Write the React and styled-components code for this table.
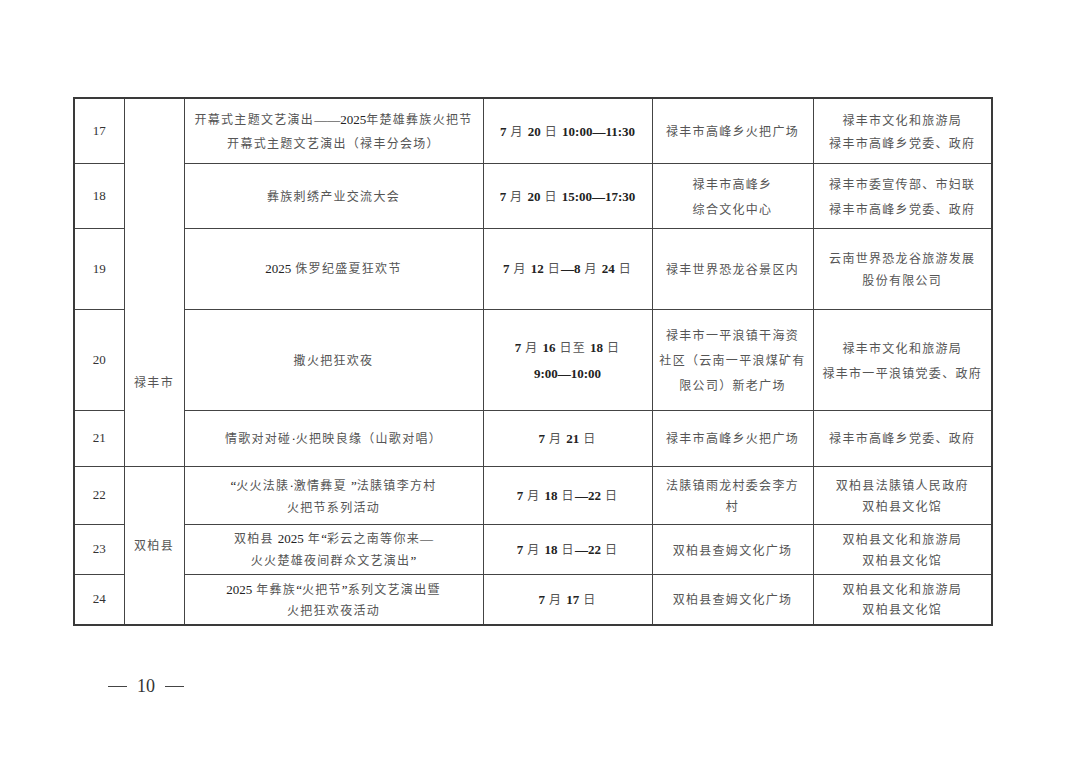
import React from 'react';
import styled, { createGlobalStyle } from 'styled-components';

const GlobalStyle = createGlobalStyle`
  html, body {
    margin: 0;
    padding: 0;
    background: #fff;
  }
  body {
    font-family: "Liberation Serif", "Noto Sans CJK SC", serif;
  }
`;

const Page = styled.div`
  width: 1080px;
  height: 764px;
  box-sizing: border-box;
  padding: 97px 0 0 73px;
  display: flex;
  flex-direction: column;
`;

const Table = styled.table`
  width: 918px;
  table-layout: fixed;
  border-collapse: collapse;
  border: 2px solid #3a3a3a;
`;

const Row = styled.tr`
  height: ${(p) => p.h}px;
`;

const Cell = styled.td`
  border: 1.5px solid #444;
  padding: ${(p) => (p.offset ? `${p.offset}px 0 0 0` : '0')};
  text-align: center;
  vertical-align: middle;
  font-family: "Noto Sans CJK SC", "Liberation Serif", sans-serif;
  font-size: 12px;
  letter-spacing: 1.3px;
  color: #555;
  line-height: ${(p) => p.lh || 22}px;
`;

const NoCell = styled(Cell)`
  font-family: "Liberation Serif", serif;
  font-size: 13px;
  letter-spacing: 0;
  color: #333;
`;

const Num = styled.span`
  font-family: "Liberation Serif", serif;
  font-size: 13px;
  letter-spacing: 0;
  color: #222;
  font-weight: ${(p) => (p.bold ? 700 : 400)};
`;

const Line = styled.div`
  white-space: nowrap;
`;

const Footer = styled.div`
  margin: 50px 0 0 35px;
  font-family: "Liberation Serif", serif;
  font-size: 18px;
  color: #333;
  display: flex;
  gap: 10px;
  align-items: center;
`;

const Dash = styled.span`
  display: inline-block;
  width: 19px;
  height: 1px;
  background: #444;
`;

// digits, times, dashes and quotes render in the serif face
const renderText = (text, bold) =>
  text.split(/([0-9:—“”·]+)/).map((part, i) =>
    /[0-9:—“”·]/.test(part) ? (
      <Num key={i} bold={bold}>
        {part}
      </Num>
    ) : (
      <React.Fragment key={i}>{part}</React.Fragment>
    )
  );

const Lines = ({ lines, bold }) =>
  lines.map((l, i) => <Line key={i}>{renderText(l, bold)}</Line>);

const cols = [50, 60, 299, 169, 161, 179];

const rows = [
  {
    no: 17,
    h: 65,
    lh: 23,
    event: ['开幕式主题文艺演出——2025年楚雄彝族火把节', '开幕式主题文艺演出（禄丰分会场）'],
    date: ['7 月 20 日 10:00—11:30'],
    place: ['禄丰市高峰乡火把广场'],
    org: ['禄丰市文化和旅游局', '禄丰市高峰乡党委、政府'],
  },
  {
    no: 18,
    h: 65,
    lh: 25,
    event: ['彝族刺绣产业交流大会'],
    date: ['7 月 20 日 15:00—17:30'],
    place: ['禄丰市高峰乡', '综合文化中心'],
    org: ['禄丰市委宣传部、市妇联', '禄丰市高峰乡党委、政府'],
  },
  {
    no: 19,
    h: 81,
    lh: 22,
    event: ['2025 侏罗纪盛夏狂欢节'],
    date: ['7 月 12 日—8 月 24 日'],
    place: ['禄丰世界恐龙谷景区内'],
    org: ['云南世界恐龙谷旅游发展', '股份有限公司'],
  },
  {
    no: 20,
    h: 101,
    lh: 25,
    event: ['撒火把狂欢夜'],
    date: ['7 月 16 日至 18 日', '9:00—10:00'],
    place: ['禄丰市一平浪镇干海资', '社区（云南一平浪煤矿有', '限公司）新老广场'],
    org: ['禄丰市文化和旅游局', '禄丰市一平浪镇党委、政府'],
  },
  {
    no: 21,
    h: 56,
    lh: 22,
    event: ['情歌对对碰·火把映良缘（山歌对唱）'],
    date: ['7 月 21 日'],
    place: ['禄丰市高峰乡火把广场'],
    org: ['禄丰市高峰乡党委、政府'],
  },
  {
    no: 22,
    h: 58,
    lh: 21,
    event: ['“火火法脿·激情彝夏 ”法脿镇李方村', '火把节系列活动'],
    date: ['7 月 18 日—22 日'],
    place: ['法脿镇雨龙村委会李方', '村'],
    org: ['双柏县法脿镇人民政府', '双柏县文化馆'],
  },
  {
    no: 23,
    h: 50,
    lh: 21,
    event: ['双柏县 2025 年“彩云之南等你来—', '火火楚雄夜间群众文艺演出”'],
    date: ['7 月 18 日—22 日'],
    place: ['双柏县查姆文化广场'],
    org: ['双柏县文化和旅游局', '双柏县文化馆'],
  },
  {
    no: 24,
    h: 51,
    lh: 20,
    event: ['2025 年彝族“火把节”系列文艺演出暨', '火把狂欢夜活动'],
    date: ['7 月 17 日'],
    place: ['双柏县查姆文化广场'],
    org: ['双柏县文化和旅游局', '双柏县文化馆'],
  },
];

const regions = {
  17: { name: '禄丰市', span: 5, offset: 200 },
  22: { name: '双柏县', span: 3 },
};

const App = () => (
  <>
    <GlobalStyle />
    <Page>
      <Table>
        <colgroup>
          {cols.map((w, i) => (
            <col key={i} style={{ width: w }} />
          ))}
        </colgroup>
        <tbody>
          {rows.map((r) => {
            const region = regions[r.no];
            return (
              <Row key={r.no} h={r.h}>
                <NoCell>{r.no}</NoCell>
                {region && (
                  <Cell rowSpan={region.span} offset={region.offset}>
                    {region.name}
                  </Cell>
                )}
                <Cell lh={r.lh}>
                  <Lines lines={r.event} />
                </Cell>
                <Cell lh={r.lh}>
                  <Lines lines={r.date} bold />
                </Cell>
                <Cell lh={r.lh}>
                  <Lines lines={r.place} />
                </Cell>
                <Cell lh={r.lh}>
                  <Lines lines={r.org} />
                </Cell>
              </Row>
            );
          })}
        </tbody>
      </Table>
      <Footer>
        <Dash />
        <span>10</span>
        <Dash />
      </Footer>
    </Page>
  </>
);

export default App;
